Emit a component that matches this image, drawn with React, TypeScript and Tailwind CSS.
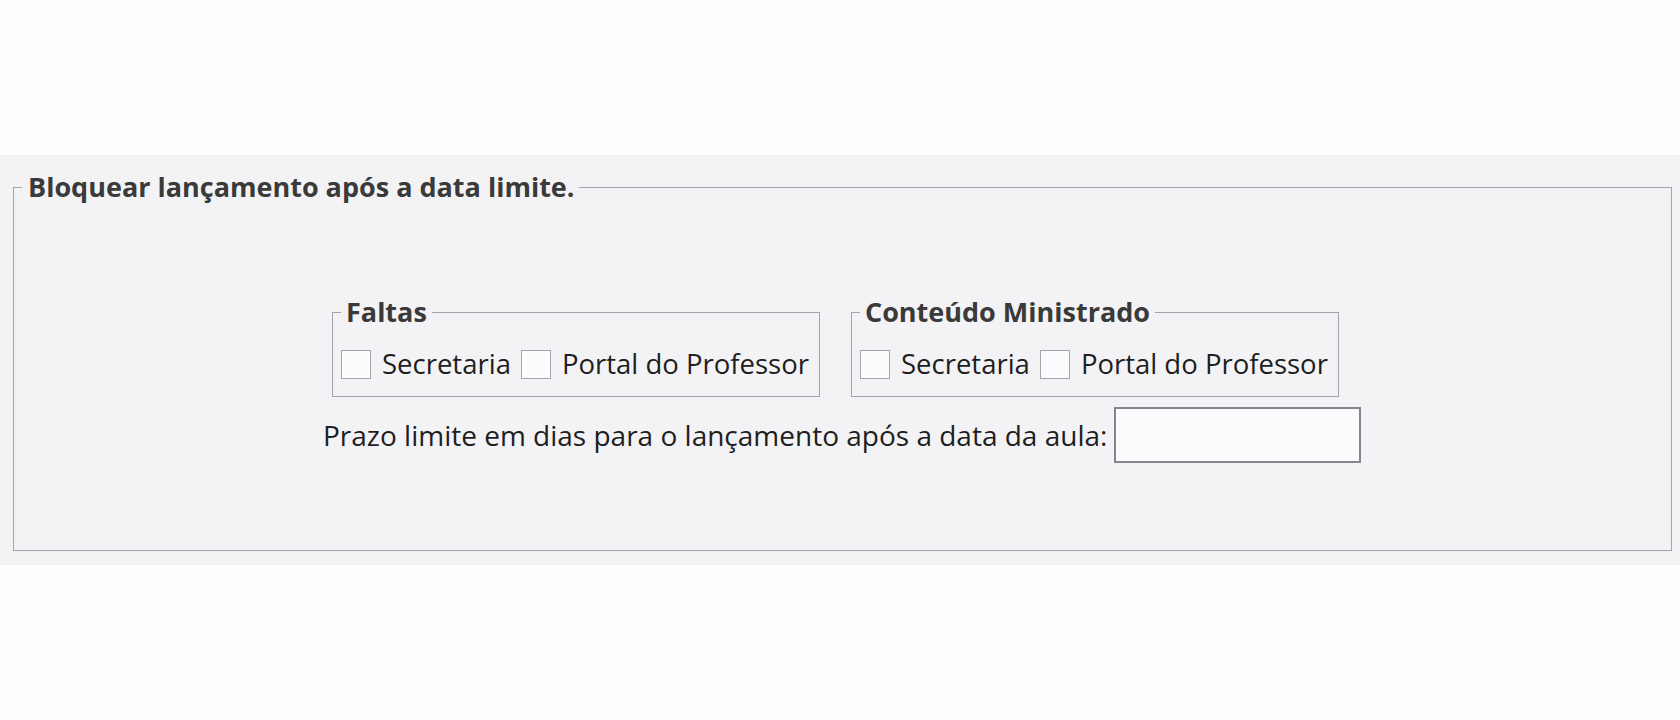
import React from "react";

const font = { fontFamily: '"Open Sans", "Noto Sans", "Liberation Sans", sans-serif' };

function Check(props: { label: string }) {
  return (
    <label className="flex items-center">
      <span className="block h-[29px] w-[30px] border-[1.5px] border-[#a4a4ac] bg-[#fcfcfe]" />
      <span className="ml-[11px] text-[27.5px] leading-[30px] text-[#1e1e1e]">{props.label}</span>
    </label>
  );
}

function GroupBox(props: { title: string }) {
  return (
    <fieldset className="border border-[#a3a3ad] pb-[17px] pl-[8px] pr-[10px] pt-[23px]">
      <legend className="px-[5px] text-[27px] font-bold leading-[28px] text-[#3a3a3a]">{props.title}</legend>
      <div className="flex items-center gap-[10px]">
        <Check label="Secretaria" />
        <Check label="Portal do Professor" />
      </div>
    </fieldset>
  );
}

export default function App() {
  return (
    <div className="h-[720px] w-[1680px] bg-[#fefefe]" style={font}>
      <div className="h-[155px]" />
      <div className="bg-[#f3f3f5] pb-[14px] pl-[13px] pr-[8px] pt-[18px]">
        <fieldset className="border border-[#a3a3ad] pb-[87px]">
          <legend className="ml-[8px] pl-[6px] pr-[4px] text-[27px] font-bold leading-[28px] text-[#3a3a3a]">
            Bloquear lançamento após a data limite.
          </legend>
          <div className="mt-[97px] ml-[318px] flex gap-[31px]">
            <GroupBox title="Faltas" />
            <GroupBox title="Conteúdo Ministrado" />
          </div>
          <div className="ml-[309px] mt-[10px] flex items-center">
            <span className="text-[28px] leading-[30px] text-[#1e1e1e]">
              Prazo limite em dias para o lançamento após a data da aula:
            </span>
            <input className="ml-[7px] h-[56px] w-[247px] border-2 border-[#85858f] bg-[#fcfcfe] outline-none" />
          </div>
        </fieldset>
      </div>
    </div>
  );
}
